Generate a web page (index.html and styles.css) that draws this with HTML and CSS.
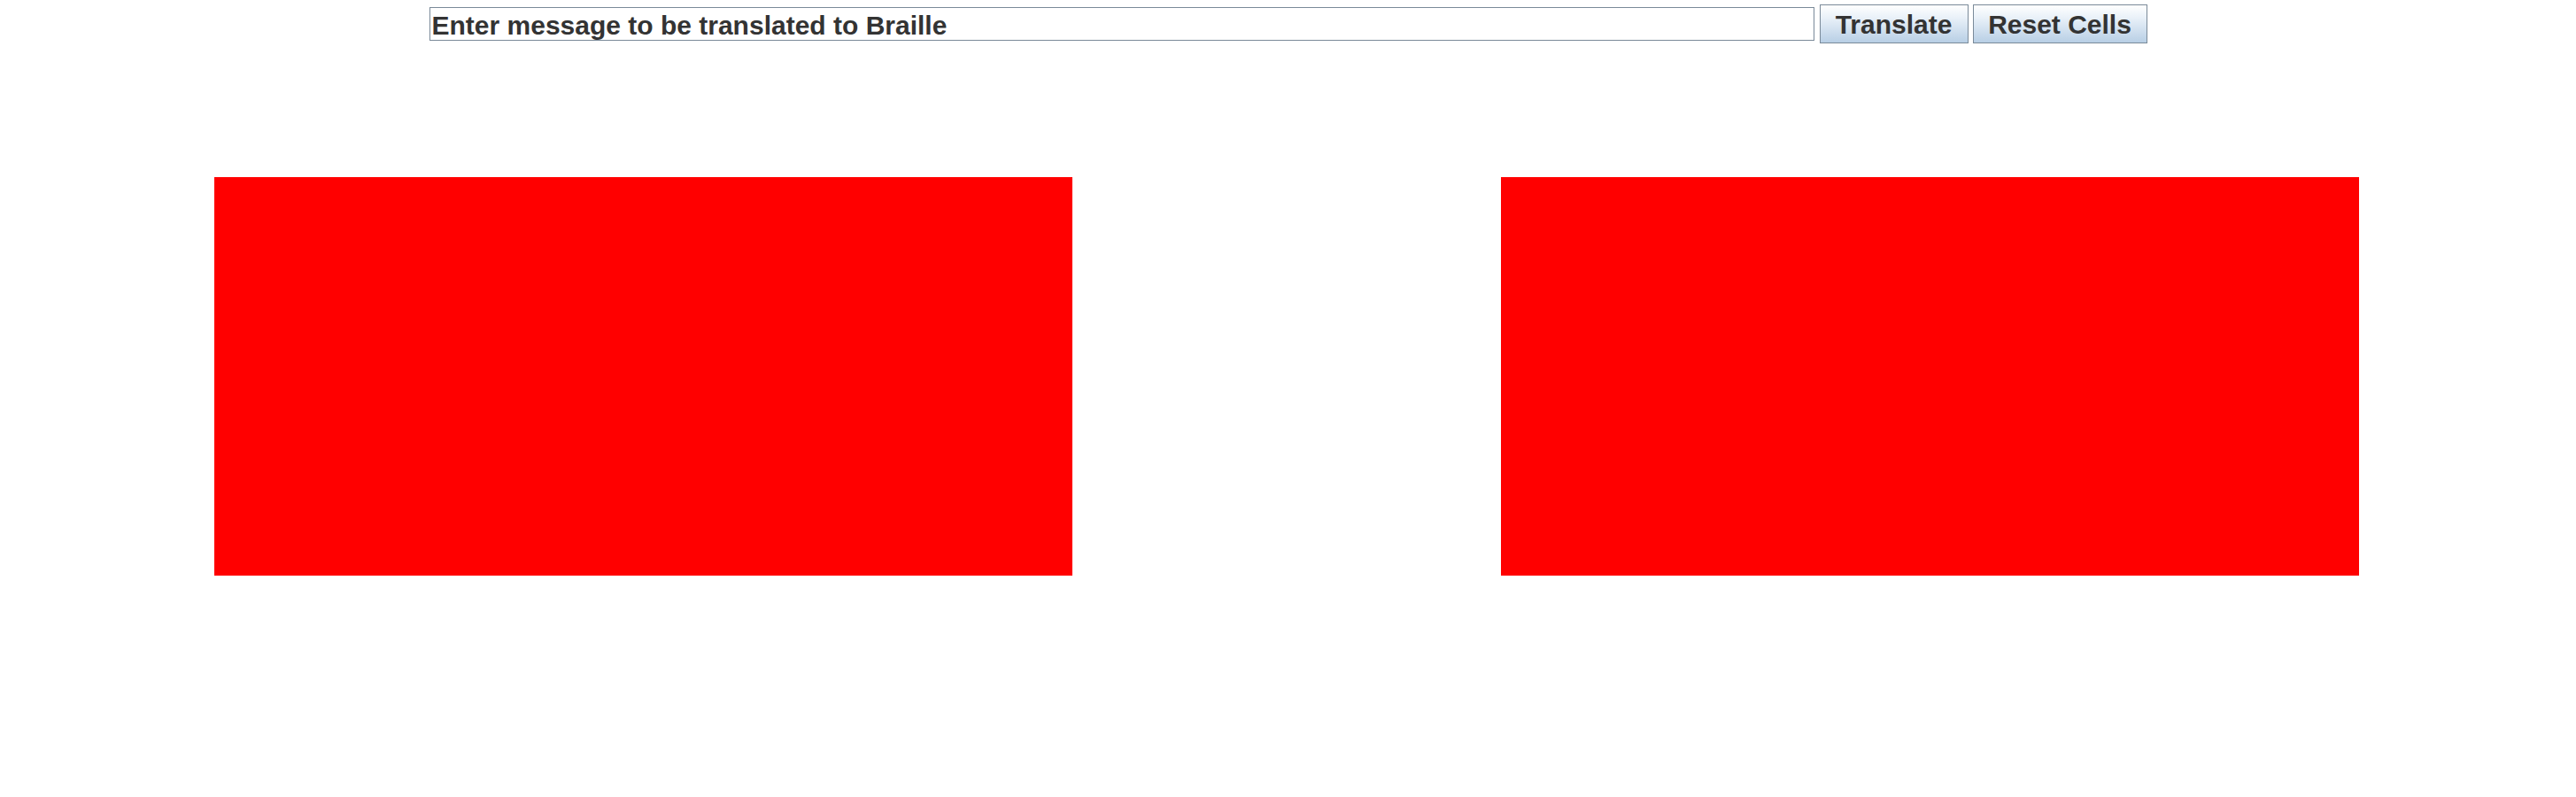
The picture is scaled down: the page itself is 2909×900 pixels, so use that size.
FILE: index.html
```html
<!DOCTYPE html>
<html>
<head>
<meta charset="utf-8">
<link rel="stylesheet" href="styles.css">
<title>Braille</title>
</head>
<body>
<div class="toolbar">
  <input class="msg" type="text" value="Enter message to be translated to Braille">
  <button class="btn btn-translate">Translate</button>
  <button class="btn btn-reset">Reset Cells</button>
</div>
<div class="cells">
  <div class="cell"></div>
  <div class="cell"></div>
</div>
</body>
</html>
```
FILE: styles.css
```css
html, body {
  margin: 0;
  padding: 0;
  background: #ffffff;
}
body {
  width: 2909px;
  height: 900px;
  font-family: "Liberation Sans", Arial, sans-serif;
}
.toolbar {
  display: flex;
  justify-content: center;
  align-items: center;
  gap: 5px;
  height: 54px;
}
.msg {
  box-sizing: border-box;
  width: 1564px;
  height: 38px;
  margin-right: 1px;
  border: 1px solid #7a8a99;
  padding: 3px 2px 0 2px;
  font-family: "Liberation Sans", Arial, sans-serif;
  font-weight: bold;
  font-size: 30px;
  color: #333333;
  background: #ffffff;
  outline: none;
}
.btn {
  box-sizing: border-box;
  height: 44px;
  border: 1px solid #7a8a99;
  background: linear-gradient(to bottom, #ffffff 0%, #e8f0f8 35%, #b8cfe5 100%);
  font-family: "Liberation Sans", Arial, sans-serif;
  font-weight: bold;
  font-size: 30px;
  color: #333333;
  padding: 2px 0 0 0;
  border-radius: 0;
}
.btn-translate {
  width: 168px;
}
.btn-reset {
  width: 197px;
}
.cells {
  display: flex;
  justify-content: space-between;
  padding: 146px 245px 0 242px;
}
.cell {
  width: 969px;
  height: 450px;
  background: #ff0000;
}
```
